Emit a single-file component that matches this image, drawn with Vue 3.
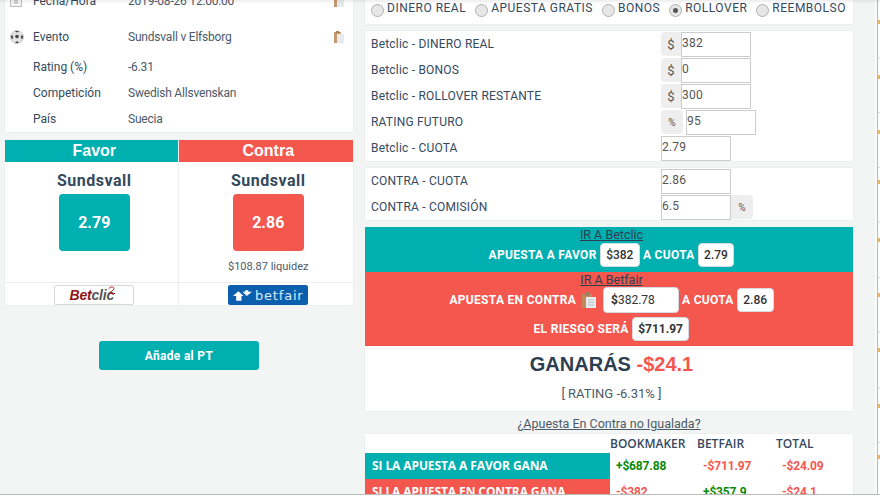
<template>
  <div class="page">
    <!-- columna izquierda -->
    <div class="left">
      <div class="info card">
        <div v-for="row in infoRows" :key="row.label" class="info-row" :class="row.cls">
          <span class="info-icon">
            <svg v-if="row.icon === 'cal'" width="12" height="12" viewBox="0 0 12 12">
              <rect x="0.5" y="0.5" width="11" height="11" fill="#f6f6f6" stroke="#bbb" />
              <rect x="4" y="4" width="4" height="5" fill="#ccc" />
            </svg>
            <svg v-if="row.icon === 'ball'" width="14" height="14" viewBox="0 0 14 14">
              <circle cx="7" cy="7" r="6.5" fill="#e2e2e2" stroke="#aaa" stroke-width="0.5" />
              <circle cx="7" cy="6.5" r="1.8" fill="#444" />
              <path d="M.8 6l1.8-1 .6 3-1.5 1.300zM13.200 6l-1.800-1-.6 3 1.500 1.300zM5 1h4L8 2.200H6zM5.200 13l1-1.600h1.600l1 1.600z" fill="#444" />
            </svg>
          </span>
          <span class="info-label">{{ row.label }}</span>
          <span class="info-value">{{ row.value }}</span>
          <svg v-if="row.copy" class="clip" width="10" height="12" viewBox="0 0 10 12">
            <rect x="0" y="1" width="7" height="11" fill="#c39a70" />
            <rect x="2" y="0" width="3" height="2" fill="#a08468" />
            <rect x="3" y="3" width="7" height="9" fill="#e8ebee" />
          </svg>
        </div>
      </div>

      <div class="odds card">
        <div class="odds-col">
          <div class="odds-head teal">Favor</div>
          <div class="odds-body">
            <div class="team">Sundsvall</div>
            <div class="price teal">2.79</div>
          </div>
          <div class="odds-logo">
            <div class="logo-betclic">
              <i>Bet</i><em>clic</em>
              <svg class="swoosh" width="8" height="8" viewBox="0 0 8 8">
                <path d="M1 2.500C2 .5 6 .5 6 2.500S2 6 1 7.500h6" fill="none" stroke="#a51c1c" stroke-width="1" />
              </svg>
            </div>
          </div>
        </div>
        <div class="odds-col">
          <div class="odds-head red">Contra</div>
          <div class="odds-body">
            <div class="team">Sundsvall</div>
            <div class="price red">2.86</div>
            <div class="liquid">$108.87 liquidez</div>
          </div>
          <div class="odds-logo">
            <div class="logo-betfair">
              <svg width="19" height="11" viewBox="0 0 18 10">
                <path d="M0 5.500L5 1l5 4.500H8V10H3V5.500zM9 1.500h2.500V0h3v1.500H18L13 5.500z" fill="#fff" />
              </svg>
              <span>betfair</span>
            </div>
          </div>
        </div>
      </div>

      <button class="add-btn">Añade al PT</button>
    </div>

    <!-- columna derecha -->
    <div class="right">
      <div class="radios card">
        <label v-for="opt in options" :key="opt" class="radio">
          <span class="dot" :class="{ on: opt === 'ROLLOVER' }"></span>{{ opt }}
        </label>
      </div>

      <div class="form card">
        <div v-for="f in backFields" :key="f.label" class="field">
          <span class="field-label">{{ f.label }}</span>
          <span v-if="f.pre" class="addon" :class="{ wide: f.pre === '%' }">{{ f.pre }}</span>
          <span class="input">{{ f.value }}</span>
        </div>
      </div>

      <div class="form card">
        <div class="field">
          <span class="field-label">CONTRA - CUOTA</span>
          <span class="input">2.86</span>
        </div>
        <div class="field">
          <span class="field-label">CONTRA - COMISIÓN</span>
          <span class="input">6.5</span>
          <span class="addon after">%</span>
        </div>
      </div>

      <div class="bet teal">
        <a class="go">IR A Betclic</a>
        <div class="bet-line">
          APUESTA A FAVOR <span class="pill">$382</span> A CUOTA <span class="pill">2.79</span>
        </div>
      </div>
      <div class="bet red">
        <a class="go">IR A Betfair</a>
        <div class="bet-line">
          APUESTA EN CONTRA
          <svg class="clip-big" width="14" height="16" viewBox="0 0 14 16">
            <rect x="0" y="2" width="10" height="14" fill="#c08a5c" />
            <rect x="3" y="0" width="4" height="4" fill="#9a8066" />
            <rect x="4" y="5" width="10" height="11" fill="#e8ebee" />
            <path d="M6 8h6M6 10.500h6M6 13h6" stroke="#bcc2c8" />
          </svg>
          <span class="pill stake"><b>$</b>382.78</span> A CUOTA <span class="pill">2.86</span>
        </div>
        <div class="bet-line risk">
          EL RIESGO SERÁ <span class="pill strong">$711.97</span>
        </div>
      </div>

      <div class="result card">
        <div class="win">GANARÁS <span>-$24.1</span></div>
        <div class="rating">[ RATING -6.31% ]</div>
      </div>

      <div class="unmatched">¿<a>Apuesta En Contra no Igualada?</a></div>

      <div class="summary card">
        <div class="sum-head">
          <span class="sum-name"></span>
          <span class="c1">BOOKMAKER</span>
          <span class="c2">BETFAIR</span>
          <span class="c3">TOTAL</span>
        </div>
        <div v-for="r in summary" :key="r.name" class="sum-row">
          <span class="sum-name" :class="r.cls">{{ r.name }}</span>
          <span v-for="(v, i) in r.vals" :key="i" :class="['c' + (i + 1), v[0] === '+' ? 'pos' : 'neg']">{{ v }}</span>
        </div>
      </div>
    </div>

    <!-- ventana detrás: franja derecha -->
    <div class="side-strip">
      <i v-for="y in ticks" :key="y" class="tick" :style="{ top: y + 'px' }"></i>
      <i v-for="y in specks" :key="y" class="speck" :style="{ top: y + 'px' }"></i>
    </div>
    <div class="top-shade"></div>
    <div class="bottom-line"></div>
  </div>
</template>

<script setup>
const infoRows = [
  { label: 'Fecha/Hora', value: '2019-08-26 12:00:00', icon: 'cal', copy: true, cls: 'first' },
  { label: 'Evento', value: 'Sundsvall v Elfsborg', icon: 'ball', copy: true, cls: 'second' },
  { label: 'Rating (%)', value: '-6.31' },
  { label: 'Competición', value: 'Swedish Allsvenskan' },
  { label: 'País', value: 'Suecia' }
]

const options = ['DINERO REAL', 'APUESTA GRATIS', 'BONOS', 'ROLLOVER', 'REEMBOLSO']

const backFields = [
  { label: 'Betclic - DINERO REAL', pre: '$', value: '382' },
  { label: 'Betclic - BONOS', pre: '$', value: '0' },
  { label: 'Betclic - ROLLOVER RESTANTE', pre: '$', value: '300' },
  { label: 'RATING FUTURO', pre: '%', value: '95' },
  { label: 'Betclic - CUOTA', value: '2.79' }
]

const summary = [
  { name: 'SI LA APUESTA A FAVOR GANA', cls: 'teal', vals: ['+$687.88', '-$711.97', '-$24.09'] },
  { name: 'SI LA APUESTA EN CONTRA GANA', cls: 'red', vals: ['-$382', '+$357.9', '-$24.1'] }
]

const ticks = [57, 112, 167, 222, 277, 332, 387, 442]
const specks = [20, 75, 130, 180, 238, 293, 348, 404, 455]
</script>

<style>
html, body { margin: 0; background: #f3f5f5; overflow: hidden; }
</style>

<style scoped>
.page {
  position: relative;
  width: 880px;
  height: 499px;
  overflow: hidden;
  background: #f3f5f5;
  display: flex;
  align-items: flex-start;
  font-family: Roboto, "Liberation Sans", sans-serif;
  font-size: 12px;
  color: #2c3e50;
  box-sizing: border-box;
  padding-left: 5px;
}

.card {
  background: #fff;
  box-shadow: 0 0 1px rgba(0, 0, 0, 0.12);
}

.teal { background: #00afb0; }
.red { background: #f4574e; }

/* izquierda */
.left {
  width: 348px;
  margin-top: -16px;
  display: flex;
  flex-direction: column;
}

.info {
  height: 148px;
  padding-top: 4px;
  box-sizing: border-box;
}

.info-row {
  display: flex;
  align-items: center;
  height: 26px;
}

.info-row.second {
  height: 34px;
  margin-top: 6px;
}

.info-icon {
  width: 28px;
  display: flex;
  padding-left: 5px;
  box-sizing: border-box;
}

.info-label {
  width: 95px;
  color: #34495e;
}

.info-value {
  color: #4b5a68;
  letter-spacing: -0.2px;
  flex: 1;
}

.clip { margin-right: 9px; }

.odds {
  display: flex;
  margin-top: 8px;
}

.odds-col {
  width: 174px;
  display: flex;
  flex-direction: column;
}

.odds-col + .odds-col {
  border-left: 1px solid #ececec;
  margin-left: -1px;
  width: 175px;
}

.odds-head {
  height: 22px;
  line-height: 21px;
  padding-left: 5px;
  text-align: center;
  color: #fff;
  font-size: 16px;
  font-weight: 700;
  font-family: "Liberation Sans", sans-serif;
}

.odds-body {
  height: 121px;
  padding: 9px 0 0 5px;
  box-sizing: border-box;
  border-bottom: 1px solid #ececec;
  display: flex;
  flex-direction: column;
  align-items: center;
}

.team {
  font-size: 16px;
  font-weight: 700;
  letter-spacing: 0.5px;
  line-height: 20px;
  color: #34495e;
}

.price {
  width: 71px;
  height: 57px;
  margin-top: 3px;
  border-radius: 4px;
  color: #fff;
  font-size: 16px;
  font-weight: 700;
  display: flex;
  align-items: center;
  justify-content: center;
}

.liquid {
  margin-top: 9px;
  font-size: 11px;
  color: #4b5a68;
}

.odds-logo {
  height: 22px;
  padding-left: 5px;
  display: flex;
  justify-content: center;
  align-items: flex-end;
}

.logo-betclic {
  position: relative;
  width: 80px;
  height: 20px;
  padding-right: 5px;
  box-sizing: border-box;
  border: 1px solid #d8d8d8;
  border-radius: 2px;
  background: #fff;
  display: flex;
  align-items: center;
  justify-content: center;
  font-family: "Liberation Sans", sans-serif;
  font-size: 14px;
  font-weight: 700;
  font-style: italic;
  letter-spacing: -0.2px;
}

.logo-betclic i { color: #8f1414; }
.logo-betclic em { color: #555; }

.swoosh {
  position: absolute;
  left: 53px;
  top: 0;
}

.logo-betfair {
  width: 80px;
  height: 20px;
  border-radius: 2px;
  background: #0c5fae;
  display: flex;
  align-items: center;
  justify-content: center;
  gap: 3px;
  color: #d9ecf8;
  font-family: "DejaVu Sans", sans-serif;
  font-size: 13px;
  letter-spacing: 0.8px;
}

.add-btn {
  display: block;
  width: 160px;
  height: 29px;
  margin: 36px auto 0;
  padding: 0;
  border: 0;
  border-radius: 3px;
  background: #00afb0;
  color: #fff;
  font-family: Roboto, "Liberation Sans", sans-serif;
  font-size: 12px;
  font-weight: 700;
  letter-spacing: 0.3px;
}

/* derecha */
.right {
  width: 488px;
  margin-left: 12px;
  display: flex;
  flex-direction: column;
}

.radios {
  height: 24px;
  display: flex;
  align-items: flex-start;
  padding-left: 6px;
  gap: 9px;
  box-sizing: border-box;
  letter-spacing: 0.5px;
}

.radio {
  display: flex;
  align-items: center;
  gap: 3px;
  height: 16px;
  color: #34495e;
}

.dot {
  position: relative;
  width: 11px;
  height: 11px;
  margin-top: 4px;
  border-radius: 50%;
  border: 1px solid #b0b0b0;
  background: #e6e6e6;
}

.dot.on::after {
  content: '';
  position: absolute;
  left: 3px;
  top: 3px;
  width: 5px;
  height: 5px;
  border-radius: 50%;
  background: #555;
}

.form {
  margin-top: 7px;
}

.form {
  padding-left: 6px;
}

.field {
  height: 26px;
  display: flex;
  align-items: center;
  color: #34495e;
  letter-spacing: 0.2px;
}

.field-label { width: 290px; }

.addon {
  width: 20px;
  height: 24px;
  background: #eee;
  border-radius: 4px 0 0 4px;
  display: flex;
  align-items: center;
  justify-content: center;
  font-size: 13px;
  color: #555;
  box-sizing: border-box;
}

.addon.wide {
  width: 22px;
  font-size: 10px;
  border-radius: 4px;
  margin-right: 3px;
}

.addon.after {
  width: 22px;
  font-size: 10px;
  border-radius: 0 4px 4px 0;
}

.input {
  width: 70px;
  height: 25px;
  line-height: 21px;
  border: 1px solid #ccc;
  background: #fff;
  box-sizing: border-box;
  color: #555;
  font-size: 12px;
}

.bet {
  padding-left: 5px;
  box-sizing: border-box;
  text-align: center;
  color: #fff;
  font-weight: 700;
  font-size: 12px;
  letter-spacing: 0.3px;
}

.form + .bet { margin-top: 7px; }

.bet.teal { height: 45px; }
.bet.red { height: 74px; }

.go {
  display: block;
  height: 16px;
  font-size: 12.5px;
  font-weight: 400;
  letter-spacing: 0;
  color: #2c3e50;
  text-decoration: underline;
  line-height: 16px;
}

.bet-line {
  display: flex;
  align-items: center;
  justify-content: center;
  gap: 3px;
  height: 24px;
}

.bet-line.risk {
  height: 30px;
  margin-top: 2px;
}

.pill {
  background: #fff;
  color: #333;
  font-weight: 500;
  letter-spacing: 0;
  border: 1px solid #d5dde3;
  border-radius: 4px;
  height: 24px;
  line-height: 22px;
  padding: 0 5.5px;
  box-sizing: border-box;
  display: inline-block;
}

.pill.stake {
  width: 76px;
  height: 26px;
  line-height: 24px;
  padding: 0 7px;
  font-weight: 400;
  text-align: left;
}

.pill.strong { font-weight: 700; }

.clip-big { margin: 0 4px 0 3px; }

.result {
  height: 65px;
  padding-left: 5px;
  box-sizing: border-box;
  text-align: center;
}

.win {
  padding-top: 5px;
  font-family: "Liberation Sans", sans-serif;
  font-size: 20px;
  font-weight: 700;
  line-height: 27px;
  color: #2c3e50;
}

.win span { color: #f4574e; }

.rating {
  margin-top: 8px;
  color: #4b5a68;
  font-size: 13px;
}

.unmatched {
  height: 23px;
  line-height: 26px;
  text-align: center;
  font-size: 12.5px;
  color: #4b5a68;
}

.unmatched a { text-decoration: underline; }

.summary {
  font-family: "Open Sans", "Liberation Sans", sans-serif;
  font-weight: 600;
}

.sum-head {
  height: 19px;
  display: flex;
  align-items: center;
  color: #34495e;
}

.sum-row {
  height: 26px;
  display: flex;
  align-items: center;
  font-family: Roboto, "Liberation Sans", sans-serif;
  font-weight: 700;
  letter-spacing: -0.15px;
}

.sum-name {
  width: 245px;
  height: 100%;
  line-height: 25px;
  padding-left: 7px;
  box-sizing: border-box;
  color: #fff;
  font-family: "Open Sans", "Liberation Sans", sans-serif;
  font-weight: 700;
  letter-spacing: -0.1px;
}

.c1 { width: 87px; }
.c2 { width: 79px; }
.c3 { width: 77px; }

.sum-row .c1,
.sum-row .c2,
.sum-row .c3 {
  padding-left: 6px;
  box-sizing: border-box;
}

.pos { color: #0a8a0a; }
.neg { color: #f4574e; }

/* lo que queda fuera de la página */
.side-strip {
  position: absolute;
  top: 0;
  right: 0;
  bottom: 0;
  width: 5px;
  background: linear-gradient(to right, #fafbfb 0 2px, #b9b9b9 2px 3px, #fff 3px);
}

.tick {
  position: absolute;
  left: 3px;
  width: 2px;
  height: 1px;
  background: #ddd;
}

.speck {
  position: absolute;
  left: 3px;
  width: 2px;
  height: 4px;
  background: #e8b56c;
}

.top-shade {
  position: absolute;
  top: 0;
  left: 0;
  right: 0;
  height: 4px;
  background: linear-gradient(to bottom, rgba(0, 0, 0, 0.07), rgba(0, 0, 0, 0));
  pointer-events: none;
}

.bottom-line {
  position: absolute;
  left: 0;
  right: 0;
  top: 494px;
  height: 5px;
  background: #fff;
  border-top: 1px solid #bbb;
  box-sizing: border-box;
}
</style>
